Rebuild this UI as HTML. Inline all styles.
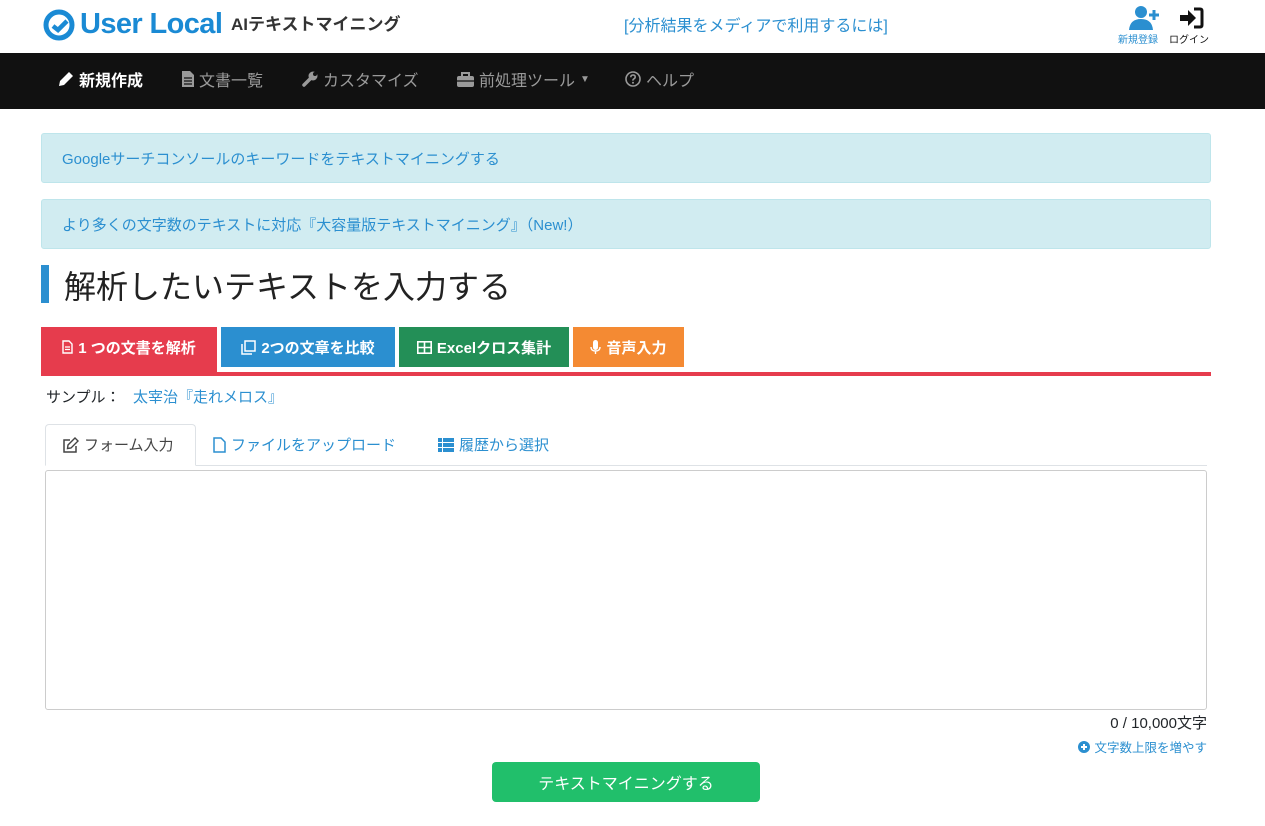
<!DOCTYPE html>
<html><head><meta charset="utf-8"><style>
*{box-sizing:border-box;margin:0;padding:0}
body{width:1265px;height:826px;background:#fff;font-family:"Liberation Sans","Noto Sans CJK JP",sans-serif;position:relative;overflow:hidden;color:#212529}
.a{position:absolute;white-space:nowrap}
.nav{position:absolute;left:0;top:53px;width:1265px;height:56px;background:#111}
.nav .i{position:absolute;top:14px;font-size:16px;color:#9a9a9a;display:flex;align-items:center;gap:5px}
.alert{position:absolute;left:41px;width:1170px;height:50px;background:#d1ecf1;border:1px solid #bee5eb;border-radius:3px;color:#2b8fd0;font-size:15px;padding:14px 20px}
.tb{position:absolute;top:327px;height:40px;color:#fff;font-size:15px;font-weight:bold;display:flex;align-items:center;justify-content:center;gap:5px}
.tab{position:absolute;top:434px;font-size:15px;color:#2b8fd0;display:flex;align-items:center;gap:5px}
svg{flex:none}
</style></head><body>
<svg class="a" style="left:43px;top:9px" width="32" height="32" viewBox="0 0 32 32"><circle cx="16" cy="16" r="13" fill="none" stroke="#1a8ad4" stroke-width="5"/><path d="M10 17 L15 21 L24 12" fill="none" stroke="#1a8ad4" stroke-width="4.5"/></svg>
<div class="a" style="left:80px;top:9px;font-size:29px;font-weight:bold;color:#1a8ad4;letter-spacing:-0.6px;line-height:30px">User Local</div>
<div class="a" style="left:231px;top:15px;font-size:17px;font-weight:bold;color:#333;line-height:20px">AIテキストマイニング</div>
<div class="a" style="left:624px;top:12px;font-size:16px;color:#2b8fd0">[分析結果をメディアで利用するには]</div>
<svg class="a" style="left:1128px;top:5px" width="32" height="26" viewBox="0 0 32 26"><circle cx="13" cy="7" r="6" fill="#2b8fd0"/><path d="M1 25 Q2 14 13 14 Q24 14 25 25Z" fill="#2b8fd0"/><path d="M26 5v10M21 10h10" stroke="#2b8fd0" stroke-width="3"/></svg>
<div class="a" style="left:1118px;top:31px;font-size:10px;color:#2b8fd0">新規登録</div>
<svg class="a" style="left:1179px;top:7px" width="25" height="22" viewBox="0 0 25 22"><path d="M1 8h8V3l8 8-8 8v-5H1z" fill="#111"/><path d="M15 2h6q2 0 2 2v14q0 2-2 2h-6" fill="none" stroke="#111" stroke-width="3"/></svg>
<div class="a" style="left:1169px;top:31px;font-size:10px;color:#111">ログイン</div>
<div class="nav">
<div class="i" style="left:58px;color:#fff;font-weight:bold"><svg width="16" height="16" viewBox="0 0 16 16"><path d="M11 1l4 4-9 9-5 1 1-5z" fill="#fff"/></svg>新規作成</div>
<div class="i" style="left:182px"><svg width="12" height="16" viewBox="0 0 12 16"><path d="M0 0h8l4 4v12H0z" fill="#9a9a9a"/><path d="M2 7h8M2 10h8M2 13h8" stroke="#111" stroke-width="1.2"/></svg>文書一覧</div>
<div class="i" style="left:302px"><svg width="16" height="16" viewBox="0 0 16 16"><path d="M2 14l7-7" stroke="#9a9a9a" stroke-width="3.5" stroke-linecap="round"/><circle cx="11" cy="5" r="4.5" fill="#9a9a9a"/><circle cx="13" cy="3" r="2" fill="#111"/></svg>カスタマイズ</div>
<div class="i" style="left:457px"><svg width="17" height="15" viewBox="0 0 17 15"><path d="M5 4V1h7v3" fill="none" stroke="#9a9a9a" stroke-width="2"/><rect x="0" y="4" width="17" height="11" rx="2" fill="#9a9a9a"/><path d="M0 9h17" stroke="#111" stroke-width="1.2"/></svg>前処理ツール <span style="font-size:10px">▼</span></div>
<div class="i" style="left:625px"><svg width="16" height="16" viewBox="0 0 16 16"><circle cx="8" cy="8" r="7" fill="none" stroke="#9a9a9a" stroke-width="1.6"/><path d="M5.8 6.2q0-2.2 2.2-2.2t2.2 2q0 1.2-1.2 1.8T8 9.6" fill="none" stroke="#9a9a9a" stroke-width="1.6"/><circle cx="8" cy="11.8" r="1" fill="#9a9a9a"/></svg>ヘルプ</div>
</div>
<div class="alert" style="top:133px">Googleサーチコンソールのキーワードをテキストマイニングする</div>
<div class="alert" style="top:199px">より多くの文字数のテキストに対応『大容量版テキストマイニング』（New!）</div>
<div class="a" style="left:41px;top:265px;width:8px;height:38px;background:#2b8fd0"></div>
<div class="a" style="left:64px;top:262px;font-size:32px;color:#222">解析したいテキストを入力する</div>
<div class="tb" style="left:41px;width:176px;height:45px;padding-bottom:5px;background:#e63c4d"><svg width="11" height="14" viewBox="0 0 11 14"><path d="M1 1h6l3 3v9H1z" fill="none" stroke="#fff" stroke-width="1.4"/><path d="M3 7h5M3 9.5h5" stroke="#fff" stroke-width="1.2"/></svg> 1 つの文書を解析</div>
<div class="tb" style="left:221px;width:174px;background:#2b8fd0"><svg width="15" height="15" viewBox="0 0 15 15"><rect x="4" y="1" width="10" height="10" fill="none" stroke="#fff" stroke-width="1.5"/><path d="M1 4v10h10" fill="none" stroke="#fff" stroke-width="1.5"/></svg>2つの文章を比較</div>
<div class="tb" style="left:399px;width:170px;background:#238f57"><svg width="15" height="13" viewBox="0 0 15 13"><rect x="0.8" y="0.8" width="13.4" height="11.4" fill="none" stroke="#fff" stroke-width="1.6"/><path d="M0 6.5h15M7.5 0v13" stroke="#fff" stroke-width="1.6"/></svg>Excelクロス集計</div>
<div class="tb" style="left:573px;width:111px;background:#f48a33"><svg width="11" height="15" viewBox="0 0 11 15"><rect x="3" y="0" width="5" height="10" rx="2.5" fill="#fff"/><path d="M1 7q0 4 4.5 4T10 7M5.5 11v3" fill="none" stroke="#fff" stroke-width="1.4"/></svg>音声入力</div>
<div class="a" style="left:41px;top:372px;width:1170px;height:4px;background:#e63c4d"></div>
<div class="a" style="left:46px;top:386px;font-size:15px">サンプル：</div>
<div class="a" style="left:133px;top:386px;font-size:15px;color:#2b8fd0">太宰治『走れメロス』</div>
<div class="a" style="left:45px;top:465px;width:1162px;height:1px;background:#dee2e6"></div>
<div class="a" style="left:45px;top:424px;width:151px;height:42px;border:1px solid #dee2e6;border-bottom:1px solid #fff;border-radius:4px 4px 0 0;background:#fff"></div>
<div class="tab" style="left:62px;color:#444"><svg width="17" height="16" viewBox="0 0 17 16"><path d="M8 3H2v12h12V9" fill="none" stroke="#444" stroke-width="1.5"/><path d="M13 1l3 3-7 7-3.5.5.5-3.5z" fill="none" stroke="#444" stroke-width="1.4"/></svg>フォーム入力</div>
<div class="tab" style="left:213px"><svg width="13" height="16" viewBox="0 0 13 16"><path d="M1 1h7l4 4v10H1z" fill="none" stroke="#2b8fd0" stroke-width="1.5"/></svg>ファイルをアップロード</div>
<div class="tab" style="left:438px"><svg width="16" height="14" viewBox="0 0 16 14"><path d="M0 0h4v4H0zM5 0h11v4H5zM0 5h4v4H0zM5 5h11v4H5zM0 10h4v4H0zM5 10h11v4H5z" fill="#2b8fd0"/></svg>履歴から選択</div>
<div class="a" style="left:45px;top:470px;width:1162px;height:240px;border:1px solid #ccc;border-radius:3px"></div>
<div class="a" style="right:58px;top:712px;font-size:15px">0 / 10,000文字</div>
<div class="a" style="right:58px;top:737px;font-size:12.5px;color:#2b8fd0;display:flex;align-items:center;gap:4px"><svg width="12" height="12" viewBox="0 0 12 12"><circle cx="6" cy="6" r="6" fill="#2b8fd0"/><path d="M6 3v6M3 6h6" stroke="#fff" stroke-width="2"/></svg>文字数上限を増やす</div>
<div class="a" style="left:492px;top:762px;width:268px;height:40px;background:#21bf6b;border-radius:4px;color:#fff;font-size:16px;display:flex;align-items:center;justify-content:center">テキストマイニングする</div>
</body></html>
